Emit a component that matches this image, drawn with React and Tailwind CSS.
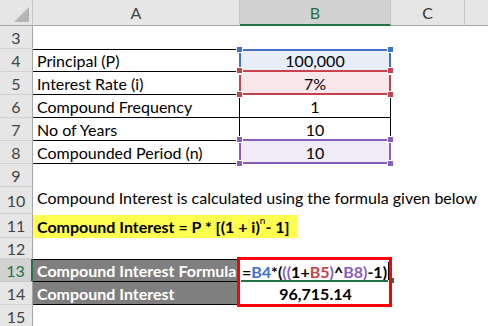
import React from 'react';

function Corners({ color }) {
  // small handles on the corners of a highlighted reference
  return (
    <>
      <span className={`absolute -left-[5px] -top-[5px] w-[7px] h-[7px] border border-white z-20 ${color}`}></span>
      <span className={`absolute -right-[5px] -top-[5px] w-[7px] h-[7px] border border-white z-20 ${color}`}></span>
      <span className={`absolute -left-[5px] -bottom-[5px] w-[7px] h-[7px] border border-white z-20 ${color}`}></span>
      <span className={`absolute -right-[5px] -bottom-[5px] w-[7px] h-[7px] border border-white z-20 ${color}`}></span>
    </>
  );
}

function RowHead({ n, active }) {
  return (
    <div
      className={
        active
          ? 'flex items-center justify-center bg-[#d2d2d2] text-[#217346] border-b border-b-[#c8c8c8] border-r-2 border-r-[#217346]'
          : 'flex items-center justify-center bg-[#e6e6e6] text-[#444] border-b border-b-[#d0d0d0] border-r border-r-[#a6a6a6]'
      }
    >
      {n}
    </div>
  );
}

export default function App() {
  return (
    <div className="w-[488px] h-[326px] overflow-hidden bg-white font-['Lato',sans-serif] text-[16px] leading-[19px] text-black">
      <div className="grid grid-cols-[33px_207px_151px_74px_1fr] grid-rows-[26px_repeat(7,23px)_27px_24px_21px_23px_23px_23px]">
        {/* header */}
        <div className="bg-[#e6e6e6] border-b border-b-[#a6a6a6] border-r border-r-[#c6c6c6] flex items-end justify-end pr-[3px] pb-[3px]">
          <svg width="15" height="15" viewBox="0 0 15 15">
            <polygon points="15,0 15,15 0,15" fill="#b4b4b4" />
          </svg>
        </div>
        <div className="bg-[#e6e6e6] border-b border-b-[#a6a6a6] border-r border-r-[#c6c6c6] flex items-center justify-center text-[#444]">A</div>
        <div className="bg-[#d2d2d2] border-b-2 border-b-[#217346] border-r border-r-[#c6c6c6] flex items-center justify-center text-[#217346]">B</div>
        <div className="bg-[#e6e6e6] border-b border-b-[#a6a6a6] border-r border-r-[#c6c6c6] flex items-center justify-center text-[#333]">C</div>
        <div className="bg-[#e6e6e6] border-b border-b-[#a6a6a6]"></div>

        {/* row 3 */}
        <RowHead n={3} />
        <div></div><div></div><div></div><div></div>

        {/* row 4 */}
        <RowHead n={4} />
        <div className="flex items-center pl-[4px] border-t border-b border-r border-black">Principal (P)</div>
        <div className="relative flex items-center justify-center border-t border-b border-r border-black">
          <div className="absolute -left-px -top-px -right-px -bottom-px border-2 border-[#4071cf] bg-[#e8eef8]">
            <Corners color="bg-[#4071cf]" />
          </div>
          <span className="relative">100,000</span>
        </div>
        <div></div><div></div>

        {/* row 5 */}
        <RowHead n={5} />
        <div className="flex items-center pl-[4px] border-b border-r border-black">Interest Rate (i)</div>
        <div className="relative flex items-center justify-center border-b border-r border-black">
          <div className="absolute -left-px -top-[2px] -right-px -bottom-px border-2 border-[#c8414b] bg-[#f9e8e9]">
            <Corners color="bg-[#c8414b]" />
          </div>
          <span className="relative">7%</span>
        </div>
        <div></div><div></div>

        {/* row 6 */}
        <RowHead n={6} />
        <div className="flex items-center pl-[4px] border-b border-r border-black">Compound Frequency</div>
        <div className="flex items-center justify-center border-b border-r border-black">1</div>
        <div></div><div></div>

        {/* row 7 */}
        <RowHead n={7} />
        <div className="flex items-center pl-[4px] border-b border-r border-black">No of Years</div>
        <div className="flex items-center justify-center border-b border-r border-black">10</div>
        <div></div><div></div>

        {/* row 8 */}
        <RowHead n={8} />
        <div className="flex items-center pl-[4px] border-b border-r border-black">Compounded Period (n)</div>
        <div className="relative flex items-center justify-center border-b border-r border-black">
          <div className="absolute -left-px -top-[2px] -right-px -bottom-px border-2 border-[#8a5cbf] bg-[#f0ecf6]">
            <Corners color="bg-[#8a5cbf]" />
          </div>
          <span className="relative">10</span>
        </div>
        <div></div><div></div>

        {/* row 9 */}
        <RowHead n={9} />
        <div></div><div></div><div></div><div></div>

        {/* row 10 */}
        <RowHead n={10} />
        <div className="col-span-4 flex items-start pt-[1px] pl-[4px] whitespace-nowrap">
          Compound Interest is calculated using the formula given below
        </div>

        {/* row 11 */}
        <RowHead n={11} />
        <div className="col-span-4 flex items-stretch pt-[1px]">
          <div className="w-[265px] bg-[#ffff4f] flex items-center pl-[4px] font-bold whitespace-nowrap">
            Compound Interest = P * [(1 + i)<span className="text-[10px] font-normal -translate-y-[6px]">n</span> - 1]
          </div>
        </div>

        {/* row 12 */}
        <RowHead n={12} />
        <div></div><div></div><div></div><div></div>

        {/* row 13 */}
        <RowHead n={13} active />
        <div className="flex items-center pl-[4px] bg-[#7f7f7f] text-white font-bold border-t border-b border-r border-black whitespace-nowrap">
          Compound Interest Formula
        </div>
        <div className="relative flex items-center pl-[2px] font-bold border-t border-black whitespace-nowrap">
          <span>=</span>
          <span className="text-[#4071cf]">B4</span>
          <span>*(</span>
          <span className="text-[#8a5cbf]">((</span>
          <span>1+</span>
          <span className="text-[#c8414b]">B5</span>
          <span className="text-[#8a5cbf]">)</span>
          <span>^</span>
          <span className="text-[#8a5cbf]">B8)</span>
          <span>-1)</span>
          <span className="ml-[1px] w-[1px] h-[18px] bg-black"></span>
          <span className="absolute left-[1px] right-[3px] bottom-0 h-[2px] bg-[#217346]"></span>
          <span className="absolute -right-[3px] -bottom-[1px] w-[4px] h-[5px] bg-[#217346]"></span>
          <div className="absolute -left-[3px] -top-[3px] w-[155px] h-[50px] border-[3px] border-[#ff0000] z-10"></div>
        </div>
        <div></div><div></div>

        {/* row 14 */}
        <RowHead n={14} />
        <div className="flex items-center pl-[4px] bg-[#7f7f7f] text-white font-bold border-b border-r border-black whitespace-nowrap">
          Compound Interest
        </div>
        <div className="flex items-center justify-center font-bold">96,715.14</div>
        <div></div><div></div>

        {/* row 15 */}
        <RowHead n={15} />
        <div></div><div></div><div></div><div></div>
      </div>
    </div>
  );
}
